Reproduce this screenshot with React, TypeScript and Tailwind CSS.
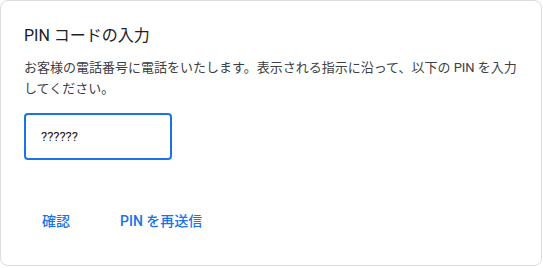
export default function App() {
  return (
    <div className="w-[543px] h-[268px] bg-white">
      <div className="w-[542px] h-[266px] border border-[#dadce0] rounded-[8px] bg-white flex flex-col pl-[23px] pr-4 pt-[24px] font-['Roboto','Noto_Sans_CJK_JP',sans-serif]">
        <div className="text-[16px] leading-[22px] text-[#202124]">PIN コードの入力</div>
        <p className="mt-[10px] text-[13px] leading-[21px] text-[#3c4043]">
          お客様の電話番号に電話をいたします。表示される指示に沿って、以下の PIN を入力してください。
        </p>
        <div className="mt-[14px] w-[148px] h-[47px] border-2 border-[#1a73e8] rounded-[4px] flex items-center pl-[15px] text-[13px] text-[#202124]">
          ??????
        </div>
        <div className="mt-[51px] flex items-center text-[14px] text-[#1a73e8] font-medium">
          <button className="ml-[18px] leading-[20px]">確認</button>
          <button className="ml-[50px] leading-[20px]">PIN を再送信</button>
        </div>
      </div>
    </div>
  );
}
